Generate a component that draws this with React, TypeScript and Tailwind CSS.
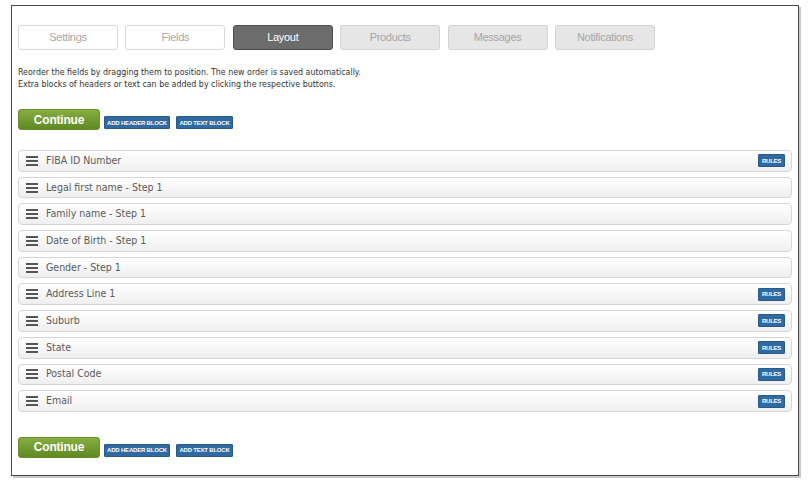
import React from "react";

const tabs = [
  { label: "Settings", state: "done" },
  { label: "Fields", state: "done" },
  { label: "Layout", state: "active" },
  { label: "Products", state: "off" },
  { label: "Messages", state: "off" },
  { label: "Notifications", state: "off" },
];

const fields = [
  { name: "FIBA ID Number", rules: true },
  { name: "Legal first name - Step 1", rules: false },
  { name: "Family name - Step 1", rules: false },
  { name: "Date of Birth - Step 1", rules: false },
  { name: "Gender - Step 1", rules: false },
  { name: "Address Line 1", rules: true },
  { name: "Suburb", rules: true },
  { name: "State", rules: true },
  { name: "Postal Code", rules: true },
  { name: "Email", rules: true },
];

function Handle() {
  return (
    <svg width="12" height="10" viewBox="0 0 12 10" className="shrink-0">
      <rect x="0" y="0" width="12" height="2" fill="#555" />
      <rect x="0" y="4" width="12" height="2" fill="#555" />
      <rect x="0" y="8" width="12" height="2" fill="#555" />
    </svg>
  );
}

function ActionBar() {
  return (
    <div className="flex items-start">
      <button className="w-[82px] h-[21px] rounded-[3px] border border-[#6b8f2a] bg-gradient-to-b from-[#86ad40] to-[#5f8a22] text-white text-[12px] font-bold leading-none font-['Liberation_Sans',sans-serif] tracking-[-0.2px]">
        Continue
      </button>
      <button className="ml-[4px] mt-[7px] h-[13px] w-[66px] rounded-[1px] bg-[#2f6aa3] border border-[#27598a] text-white text-[6px] font-bold leading-none uppercase tracking-[-0.2px] font-['Liberation_Sans',sans-serif]">
        Add header block
      </button>
      <button className="ml-[6px] mt-[7px] h-[13px] w-[57px] rounded-[1px] bg-[#2f6aa3] border border-[#27598a] text-white text-[6px] font-bold leading-none uppercase tracking-[-0.2px] font-['Liberation_Sans',sans-serif]">
        Add text block
      </button>
    </div>
  );
}

export default function App() {
  return (
    <div className="w-[808px] h-[484px] bg-white pt-[5px] pl-[11px]">
      <div className="w-[788px] h-[471px] border border-[#4a4a4a] shadow-[2px_2px_0_#c8c8c8] bg-white pl-[6px] pt-[19px] pr-[6px]">
        <div className="flex gap-[7.4px]">
          {tabs.map((t) => (
            <div
              key={t.label}
              className={
                "w-[100px] h-[25px] rounded-[3px] flex items-center justify-center text-[11px] font-['Liberation_Sans',sans-serif] tracking-[-0.3px] border " +
                (t.state === "active"
                  ? "bg-[#6c6c6c] border-[#4e4e4e] text-white"
                  : t.state === "done"
                  ? "bg-white border-[#d9d9d9] text-[#a8a8a8]"
                  : "bg-[#e6e6e6] border-[#d3d3d3] text-[#a5a5a5]")
              }
            >
              {t.label}
            </div>
          ))}
        </div>

        <div className="mt-[16px] text-[8.8px] leading-[12px] text-[#333] font-['DejaVu_Sans_Condensed','DejaVu_Sans',sans-serif]">
          <p>Reorder the fields by dragging them to position. The new order is saved automatically.</p>
          <p>Extra blocks of headers or text can be added by clicking the respective buttons.</p>
        </div>

        <div className="mt-[19px]">
          <ActionBar />
        </div>

        <div className="mt-[20px] flex flex-col gap-[5px] w-[774px]">
          {fields.map((f) => (
            <div
              key={f.name}
              className="h-[21.7px] rounded-[4px] border border-[#d6d6d6] bg-gradient-to-b from-white to-[#efefef] flex items-center pl-[7px] pr-[6px]"
            >
              <Handle />
              <span className="ml-[8px] text-[10.5px] text-[#5a5a5a] font-['DejaVu_Sans_Condensed','DejaVu_Sans',sans-serif]">
                {f.name}
              </span>
              {f.rules && (
                <span className="ml-auto h-[13px] w-[27px] rounded-[1px] bg-[#2f6aa3] border border-[#27598a] text-white text-[6px] font-bold leading-none flex items-center justify-center tracking-[-0.3px] font-['Liberation_Sans',sans-serif]">
                  RULES
                </span>
              )}
            </div>
          ))}
        </div>

        <div className="mt-[25px]">
          <ActionBar />
        </div>
      </div>
    </div>
  );
}
